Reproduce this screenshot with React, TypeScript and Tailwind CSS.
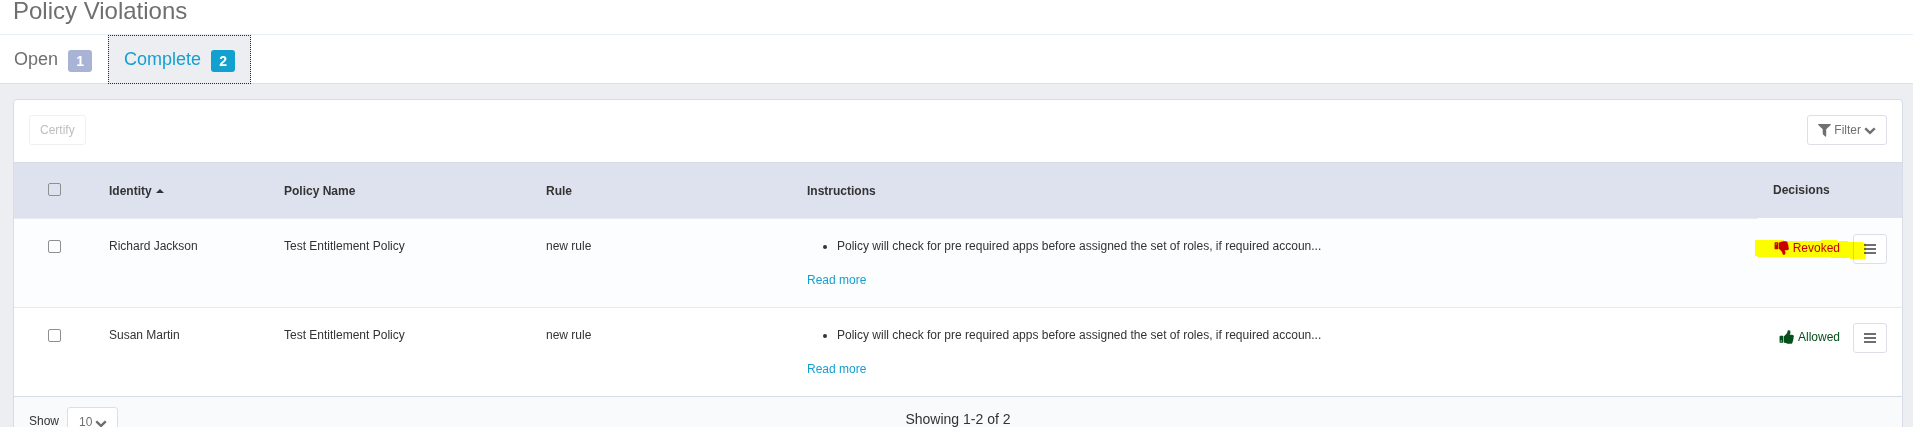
import type { SVGProps } from 'react';

const rows = [
  { identity: 'Richard Jackson', policy: 'Test Entitlement Policy', rule: 'new rule', decision: 'Revoked' },
  { identity: 'Susan Martin', policy: 'Test Entitlement Policy', rule: 'new rule', decision: 'Allowed' },
];

const instructions = 'Policy will check for pre required apps before assigned the set of roles, if required accoun...';

const outlineButton = 'flex h-[30px] items-center rounded-[3px] border border-[#dcdfe8] bg-white text-xs text-[#6f6f6f]';
const checkbox = 'mx-auto block size-[13px] appearance-none rounded-[2px] border border-[#8f8f8f]';
const badge = 'mt-[3px] w-6 rounded-[3px] text-center text-sm leading-[22px] font-bold text-white';

function Icon({ d, ...props }: SVGProps<SVGSVGElement> & { d: string }) {
  return (
    <svg viewBox="0 0 1792 1792" fill="currentColor" aria-hidden="true" {...props}>
      <path d={d} />
    </svg>
  );
}

const chevronPath = 'M1683 808l-742 741q-19 19-45 19t-45-19l-742-741q-19-19-19-45.5t19-45.5l166-165q19-19 45-19t45 19l531 531 531-531q19-19 45-19t45 19l166 165q19 19 19 45.5t-19 45.5z';
const filterPath = 'M1595 295q17 41-14 70l-493 493v742q0 42-39 59-13 5-25 5-27 0-45-19l-256-256q-19-19-19-45v-486l-493-493q-31-29-14-70 17-39 59-39h1280q42 0 59 39z';
const thumbPath = 'M320 1344q0-26-19-45t-45-19q-27 0-45.5 19t-18.5 45q0 27 18.5 45.5t45.5 18.5q26 0 45-18.5t19-45.5zm160-512v640q0 26-19 45t-45 19h-288q-26 0-45-19t-19-45v-640q0-26 19-45t45-19h288q26 0 45 19t19 45zm1184 0q0 86-55 149 15 44 15 76 3 76-43 137 17 56 0 117-15 57-54 94 9 112-49 181-64 76-197 78h-129q-66 0-144-15.5t-121.5-29-120.5-39.5q-123-43-158-44-26-1-45-19.5t-19-44.5v-641q0-25 18-43.5t43-20.5q24-2 76-59t101-121q68-87 101-120 18-18 31-48t17.5-48.5 13.5-60.5q7-39 12.5-61t19.5-52 34-50q19-19 45-19 46 0 82.5 10.5t60 26 40 40.5 24 45 12 50 5 45 .5 39q0 38-9.5 76t-19 60-27.5 56q-3 6-10 18t-11 22-8 24h277q78 0 135 57t57 135z';

function Decision({ value }: { value: string }) {
  const revoked = value === 'Revoked';
  return (
    <div className="relative flex items-start justify-end gap-[13px]">
      <span className={`flex h-7 items-center gap-[3px] ${revoked ? 'text-[#c9000d]' : 'text-[#054f1b]'}`}>
        <Icon d={thumbPath} className={`size-4 ${revoked ? '-scale-y-100' : ''}`} />
        {value}
      </span>
      <button type="button" aria-label="Actions" className={`${outlineButton} w-[34px] justify-center`}>
        <svg viewBox="0 0 12 10" className="h-2.5 w-3" fill="currentColor" aria-hidden="true">
          <path d="M0 0h12v2H0zM0 4h12v2H0zM0 8h12v2H0z" />
        </svg>
      </button>
      {revoked && (
        // highlighter stroke across the decision
        <svg viewBox="0 0 111 19" className="pointer-events-none absolute top-1.5 right-[21px] h-[19px] w-[111px] mix-blend-multiply" fill="#ffff00" aria-hidden="true">
          <path d="M0 0H29V1H66V0H82V1H93V2H108V3H111V19H95V18H76V17H2V16H0Z" />
        </svg>
      )}
    </div>
  );
}

function App() {
  return (
    <div className="h-screen overflow-hidden bg-[#edeef2] font-['Liberation_Sans',Arial,sans-serif] text-xs text-[#333333]">
      <header className="border-b border-[#e6edf3] bg-white px-[13px] pb-3">
        <h1 className="text-2xl leading-[22px] text-[#6f6f6f]">Policy Violations</h1>
      </header>

      <nav className="flex h-[49px] border-b border-[#dcdfe5] bg-white text-lg">
        <button type="button" className="flex items-center gap-2.5 pr-4 pl-3.5 text-[#6f6f6f]">
          Open
          <span className={`${badge} bg-[#a8b3d5]`}>1</span>
        </button>
        <button type="button" className="-mb-px flex items-center gap-2.5 border border-dotted border-[#0a2a66] bg-[#edeef2] px-[15px] pb-px text-[#159fcf]">
          Complete
          <span className={`${badge} bg-[#12a1ce]`}>2</span>
        </button>
      </nav>

      <main className="mt-[15px] mr-2.5 ml-[13px] rounded-t border border-[#d8dce6] bg-white">
        <div className="flex justify-between px-[15px] pt-[15px] pb-[17px]">
          <button type="button" disabled className={`${outlineButton} px-2.5 opacity-45`}>Certify</button>
          <button type="button" className={`${outlineButton} gap-[3px] px-2.5`}>
            <Icon d={filterPath} viewBox="180 160 1440 1536" className="h-3.5 w-[13px]" />
            Filter
            <Icon d={chevronPath} className="size-3" />
          </button>
        </div>

        <table className="w-full table-fixed border-collapse text-left">
          <colgroup>
            <col className="w-20" />
            <col className="w-[175px]" />
            <col className="w-[262px]" />
            <col className="w-[261px]" />
            <col />
            <col className="w-36" />
          </colgroup>
          <thead>
            <tr className="h-14 border-y border-t-[#d8dce6] border-b-[#e8ebee] bg-[#dee2ee]">
              <th className="pb-0.5"><input type="checkbox" aria-label="Select all" className={checkbox} /></th>
              <th className="px-[15px]">
                <button type="button" className="flex items-center gap-1 font-bold">
                  Identity
                  <span className="border-x-4 border-b-4 border-x-transparent border-b-[#333333]" />
                </button>
              </th>
              <th className="px-[15px]">Policy Name</th>
              <th className="px-[15px]">Rule</th>
              <th className="px-[15px]">Instructions</th>
              <th className="border-b border-white px-[15px] pb-px">Decisions</th>
            </tr>
          </thead>
          <tbody>
            {rows.map((row) => (
              <tr key={row.identity} className="border-b border-[#e8ebee] align-top leading-[18px] odd:bg-[#fcfdff] last:border-[#d8dce6]">
                <td className="pt-[21px]"><input type="checkbox" aria-label={`Select ${row.identity}`} className={checkbox} /></td>
                <td className="px-[15px] pt-[18px]">{row.identity}</td>
                <td className="px-[15px] pt-[18px]">{row.policy}</td>
                <td className="px-[15px] pt-[18px]">{row.rule}</td>
                <td className="px-[15px] py-[18px]">
                  <ul className="list-disc pl-[30px]">
                    <li>{instructions}</li>
                  </ul>
                  <a href="#" className="mt-4 inline-block text-[#159fcf]">Read more</a>
                </td>
                <td className="pt-[15px] pr-[15px]"><Decision value={row.decision} /></td>
              </tr>
            ))}
          </tbody>
        </table>

        <footer className="grid grid-cols-3 bg-[#f9fafc] px-[15px] py-2.5">
          <div className="flex items-center gap-2">
            <label htmlFor="page-size" className="pb-0.5">Show</label>
            <div className="relative">
              <select id="page-size" className={`${outlineButton} w-[51px] appearance-none px-[11px]`}>
                <option>10</option>
                <option>25</option>
                <option>50</option>
              </select>
              <Icon d={chevronPath} className="pointer-events-none absolute top-2.5 right-[11px] size-3 text-[#6f6f6f]" />
            </div>
          </div>
          <p className="text-center text-sm leading-6">Showing 1-2 of 2</p>
        </footer>
      </main>
    </div>
  );
}

export default App;
